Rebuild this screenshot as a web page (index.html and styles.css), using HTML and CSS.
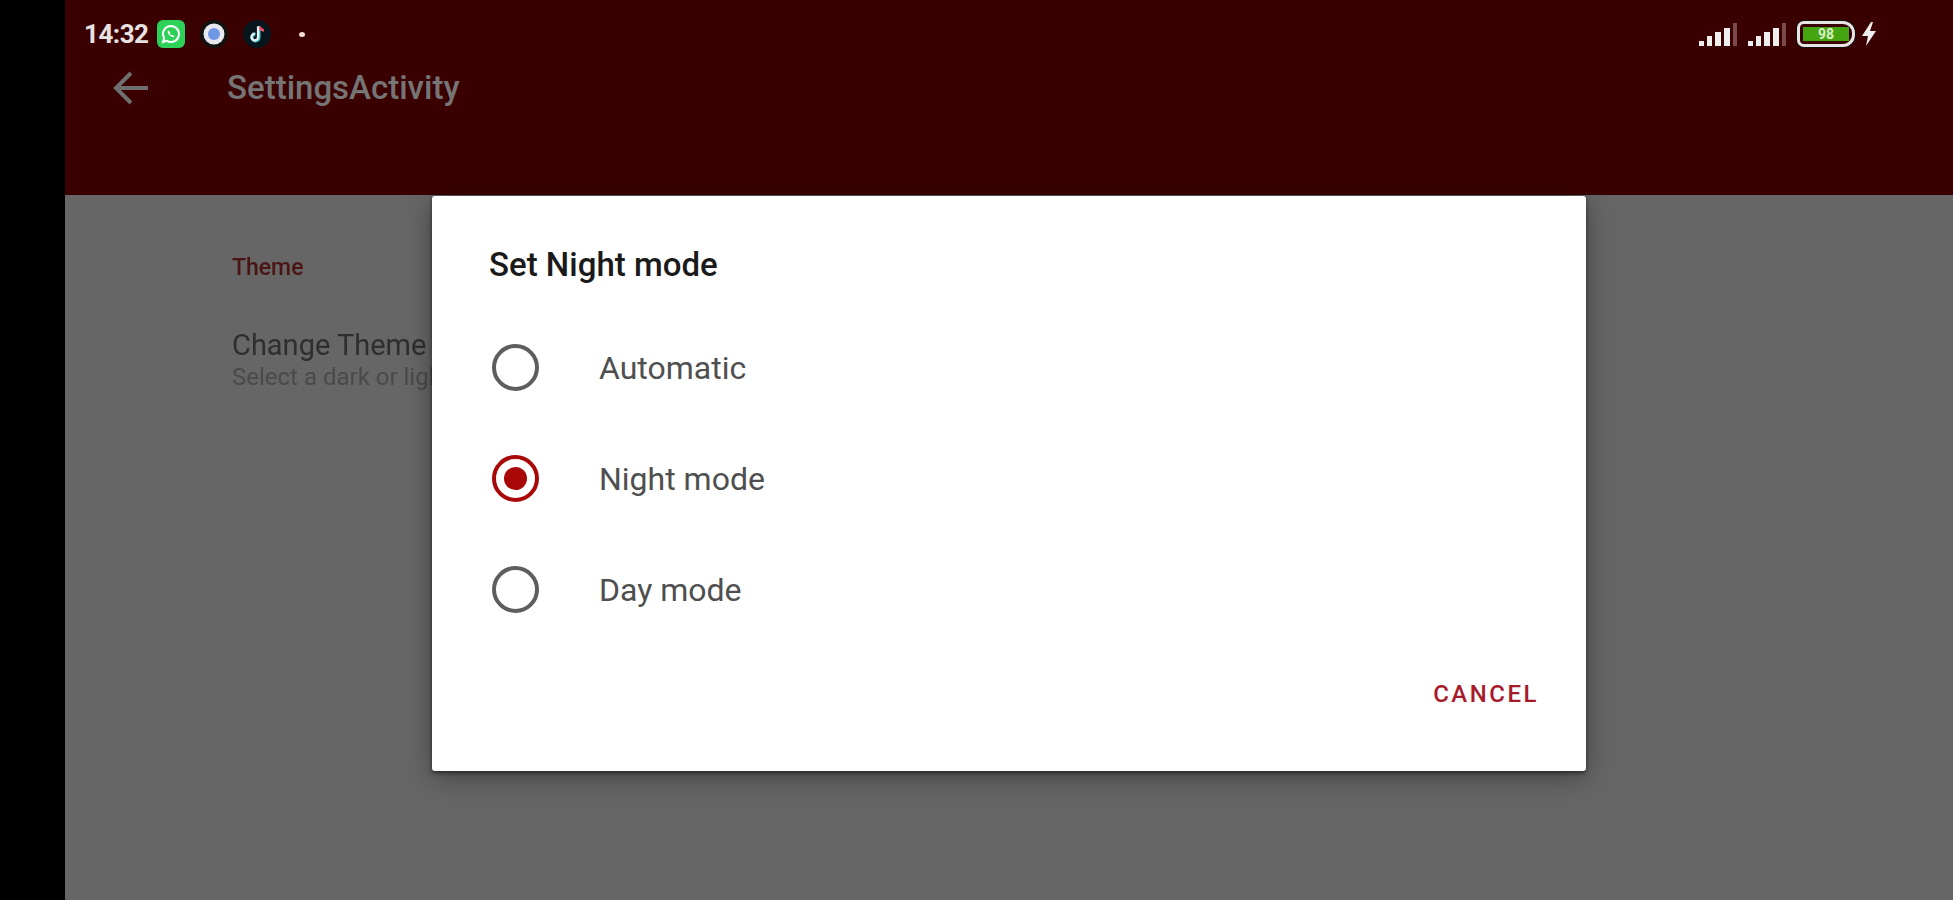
FILE: index.html
```html
<!DOCTYPE html>
<html lang="en">
<head>
    <meta charset="UTF-8">
    <meta name="viewport" content="width=device-width, initial-scale=1.0">
    <title>SettingsActivity</title>
    <link rel="stylesheet" href="styles.css">
</head>
<body>
    <div class="bezel"></div>
    <div class="screen">
        <div class="app-bar">
            <div class="status-bar">
                <div class="status-left">
                    <span class="clock">14:32</span>
                    <svg class="notif-icon whatsapp" viewBox="0 0 28 28">
                        <rect width="28" height="28" rx="6" fill="#2ed158"/>
                        <path d="M14 6a8 8 0 0 0-6.8 12.2L6 22l3.9-1.1A8 8 0 1 0 14 6z" fill="none" stroke="#fff" stroke-width="2"/>
                        <path d="M11 10.5c-1 1.500 .5 4 2 5.300s3.500 2 4.500 1l-1.500-1.800-1.200 .6c-1-.5-1.700-1.300-2.100-2.300l.7-1z" fill="#fff"/>
                    </svg>
                    <svg class="notif-icon chrome" viewBox="0 0 28 28">
                        <circle cx="14" cy="14" r="14" fill="#111"/>
                        <circle cx="14" cy="14" r="10.500" fill="#e6e8ee"/>
                        <circle cx="14" cy="14" r="6" fill="#6f97e6"/>
                    </svg>
                    <svg class="notif-icon tiktok" viewBox="0 0 28 28">
                        <circle cx="14" cy="14" r="14" fill="#07151c"/>
                        <path d="M16 6v11.500a3.500 3.500 0 1 1-3.500-3.500" fill="none" stroke="#3fd0d8" stroke-width="3"/>
                        <path d="M16.500 6.500c.5 2.500 2 3.800 4.500 4" fill="none" stroke="#f04a68" stroke-width="2.500"/>
                        <path d="M15 6.500v10.500a3.300 3.300 0 1 1-3.300-3.300" fill="none" stroke="#f2f2f2" stroke-width="2.200"/>
                    </svg>
                    <span class="more-dot"></span>
                </div>
                <div class="status-right">
                    <svg class="signal" viewBox="0 0 40 26">
                        <rect x="0" y="20" width="5" height="5" fill="#eee"/>
                        <rect x="8" y="15" width="5" height="10" fill="#eee"/>
                        <rect x="16" y="11" width="6" height="14" fill="#eee"/>
                        <rect x="25" y="7" width="6" height="18" fill="#eee"/>
                        <rect x="34" y="2" width="4" height="23" fill="#7a4a4a"/>
                    </svg>
                    <svg class="signal" viewBox="0 0 40 26">
                        <rect x="0" y="20" width="5" height="5" fill="#eee"/>
                        <rect x="8" y="15" width="5" height="10" fill="#eee"/>
                        <rect x="16" y="11" width="6" height="14" fill="#eee"/>
                        <rect x="25" y="7" width="6" height="18" fill="#eee"/>
                        <rect x="34" y="2" width="4" height="23" fill="#7a4a4a"/>
                    </svg>
                    <div class="battery">
                        <span class="battery-fill">98</span>
                    </div>
                    <svg class="bolt" viewBox="0 0 18 26">
                        <path d="M11 1 2 15h6l-2 10 10-15h-6l3-9z" fill="#eee"/>
                    </svg>
                </div>
            </div>
            <div class="toolbar">
                <svg class="back-arrow" viewBox="0 0 40 40">
                    <path d="M37 20H5M20 5 5 20l15 15" fill="none" stroke="#6f6f6f" stroke-width="4"/>
                </svg>
                <h1 class="toolbar-title">SettingsActivity</h1>
            </div>
        </div>

        <div class="settings">
            <p class="category">Theme</p>
            <p class="pref-title">Change Theme</p>
            <p class="pref-summary">Select a dark or light theme</p>
        </div>

        <div class="dialog">
            <h2 class="dialog-title">Set Night mode</h2>
            <div class="options">
                <div class="option">
                    <span class="radio"></span>
                    <span class="option-label">Automatic</span>
                </div>
                <div class="option">
                    <span class="radio checked"></span>
                    <span class="option-label">Night mode</span>
                </div>
                <div class="option">
                    <span class="radio"></span>
                    <span class="option-label">Day mode</span>
                </div>
            </div>
            <div class="dialog-actions">
                <button class="cancel-button">CANCEL</button>
            </div>
        </div>
    </div>
</body>
</html>
```

FILE: styles.css
```css
html, body {
    height: 100%;
}

body {
    font-family: Roboto, "Liberation Sans", sans-serif;
    background-color: #000;
    margin: 0;
    display: flex;
    overflow: hidden;
}

.bezel {
    width: 65px;
    flex-shrink: 0;
    background-color: #000;
}

.screen {
    flex-grow: 1;
    position: relative;
    background-color: #666;
    display: flex;
    flex-direction: column;
}

.app-bar {
    height: 195px;
    background-color: #3a0000;
}

.status-bar {
    height: 68px;
    padding: 0 75px 0 19px;
    display: flex;
    justify-content: space-between;
    align-items: center;
}

.status-left,
.status-right {
    display: flex;
    align-items: center;
}

.clock {
    font-size: 26px;
    font-weight: 700;
    color: #e8e2e2;
    letter-spacing: -0.5px;
    margin-right: 8px;
}

.notif-icon {
    width: 28px;
    height: 28px;
    margin-right: 15px;
}

.more-dot {
    width: 6px;
    height: 5px;
    margin-left: 13px;
    border-radius: 50%;
    background-color: #f5dcd6;
}

.signal {
    width: 40px;
    height: 26px;
    margin-right: 9px;
}

.battery {
    width: 58px;
    height: 26px;
    border: 3px solid #e8e4e4;
    border-radius: 7px 12px 12px 7px;
    box-sizing: border-box;
    padding: 3px;
    display: flex;
    box-shadow: 0 0 0 1px #111;
}

.battery-fill {
    flex-grow: 1;
    background-color: #45a510;
    color: #d9f0c8;
    font-size: 14px;
    font-weight: 700;
    line-height: 14px;
    text-align: center;
}

.bolt {
    width: 18px;
    height: 26px;
    margin-left: 5px;
}

.toolbar {
    height: 127px;
    padding-left: 46px;
    display: flex;
    align-items: flex-start;
}

.back-arrow {
    width: 40px;
    height: 40px;
    margin-top: 0;
}

.toolbar-title {
    margin: 0 0 0 76px;
    font-size: 33px;
    line-height: 40px;
    font-weight: 500;
    color: #757575;
}

.settings {
    padding: 59px 0 0 167px;
    filter: blur(0.5px);
}

.settings p {
    margin: 0;
}

.category {
    font-size: 23px;
    font-weight: 500;
    line-height: 27px;
    color: #4a1414;
}

.pref-title {
    margin-top: 47px !important;
    font-size: 29px;
    line-height: 34px;
    color: #2e2e2e;
}

.pref-summary {
    font-size: 24px;
    line-height: 30px;
    color: #4a4a4a;
}

/* modal sits over the dimmed settings list */
.dialog {
    position: absolute;
    left: 367px;
    top: 196px;
    width: 1154px;
    height: 575px;
    box-sizing: border-box;
    padding: 49px 47px 0 57px;
    background-color: #fff;
    border-radius: 3px;
    box-shadow: 0 6px 28px rgba(0, 0, 0, 0.35), 0 2px 4px rgba(0, 0, 0, 0.5);
    display: flex;
    flex-direction: column;
}

.dialog-title {
    margin: 0;
    font-size: 33px;
    line-height: 40px;
    font-weight: 500;
    color: #1a1a1a;
}

.options {
    margin-top: 27px;
    display: flex;
    flex-direction: column;
}

.option {
    height: 111px;
    display: flex;
    align-items: center;
}

.radio {
    width: 47px;
    height: 47px;
    margin-left: 3px;
    box-sizing: border-box;
    border: 4px solid #5e5e5e;
    border-radius: 50%;
    flex-shrink: 0;
    display: flex;
    align-items: center;
    justify-content: center;
}

.radio.checked {
    border-color: #a80808;
}

.radio.checked::after {
    content: "";
    width: 23px;
    height: 23px;
    border-radius: 50%;
    background-color: #a80808;
}

.option-label {
    margin-left: 60px;
    font-size: 32px;
    color: #4f4f4f;
}

.dialog-actions {
    margin-top: 35px;
    display: flex;
    justify-content: flex-end;
}

.cancel-button {
    border: none;
    background: none;
    padding: 0;
    font-family: inherit;
    font-size: 24px;
    font-weight: 500;
    letter-spacing: 2.5px;
    color: #a81a2a;
    cursor: pointer;
}
```
